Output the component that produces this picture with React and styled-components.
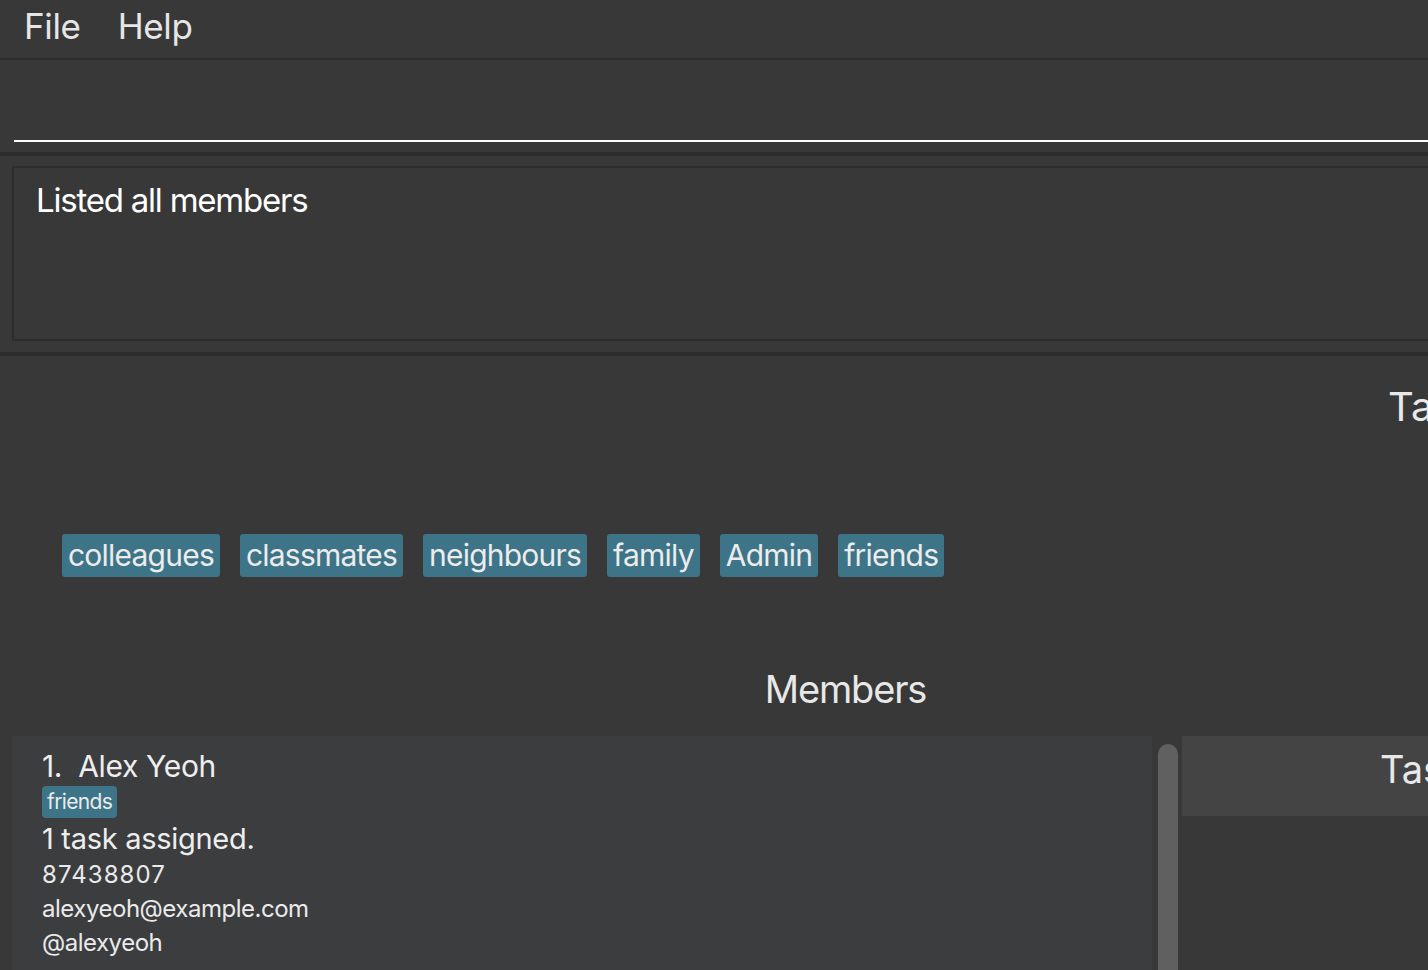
import React from "react";
import styled, { createGlobalStyle } from "styled-components";

const Global = createGlobalStyle`
  html, body { margin: 0; padding: 0; background: #383838; overflow: hidden; }
  body { font-family: Inter, "Noto Sans", sans-serif; }
  #root { width: 1428px; height: 970px; overflow: hidden; }
`;

const Page = styled.div`
  width: 1800px;
  display: flex;
  flex-direction: column;
  background: #383838;
  color: #eeeeee;
`;

const MenuBar = styled.div`
  height: 58px;
  display: flex;
  align-items: flex-start;
  gap: 37px;
  padding-left: 24px;
  border-bottom: 2px solid #2c2c2c;
`;

const MenuItem = styled.span`
  font-size: 35px;
  line-height: 42px;
  margin-top: 5px;
  color: #e6e6e6;
  letter-spacing: -0.01em;
`;

const CommandArea = styled.div`
  height: 92px;
  display: flex;
  align-items: flex-end;
  padding: 0 0 10px 14px;
  box-sizing: border-box;
`;

const CommandInput = styled.div`
  flex: 1;
  height: 70px;
  border-bottom: 2px solid #ffffff;
`;

const Divider = styled.div`
  height: 4px;
  background: #2c2c2c;
`;

const ResultArea = styled.div`
  padding: 10px 0 11px 12px;
`;

const ResultBox = styled.div`
  height: 175px;
  box-sizing: border-box;
  border: 2px solid #2c2c2c;
  padding: 12px 0 0 22px;
  font-size: 33px;
  line-height: 40px;
  color: #ffffff;
  letter-spacing: -0.037em;
`;

const Main = styled.div`
  display: flex;
  flex-direction: column;
  padding-top: 31px;
`;

const TagsTitle = styled.div`
  font-size: 40px;
  line-height: 40px;
  padding-left: 1388px;
  color: #e8e8e8;
`;

const TagRow = styled.div`
  display: flex;
  gap: 20px;
  padding-left: 62px;
  margin-top: 107px;
`;

const Tag = styled.span`
  background: #3d7488;
  color: #ececec;
  border-radius: ${(p) => (p.$small ? 4 : 3)}px;
  font-size: ${(p) => (p.$small ? 21 : 30)}px;
  line-height: ${(p) => (p.$small ? 32 : 43)}px;
  height: ${(p) => (p.$small ? 32 : 43)}px;
  padding: 0 ${(p) => (p.$small ? 5 : 6)}px;
  letter-spacing: ${(p) => (p.$small ? -0.03 : -0.026)}em;
  white-space: nowrap;
`;

const MembersTitle = styled.div`
  width: 1691px;
  text-align: center;
  font-size: 38px;
  line-height: 40px;
  margin-top: 92px;
  color: #e8e8e8;
  letter-spacing: -0.03em;
`;

const Split = styled.div`
  display: flex;
  margin-top: 27px;
  padding-left: 12px;
  height: 400px;
`;

const MemberList = styled.div`
  width: 1140px;
  background: #3c3d3f;
  display: flex;
  flex-direction: column;
`;

const ScrollTrack = styled.div`
  width: 20px;
  margin-left: 6px;
  padding-top: 8px;
  display: flex;
`;

const Thumb = styled.div`
  flex: 1;
  background: #606060;
  border-radius: 10px 10px 0 0;
`;

const TasksPanel = styled.div`
  flex: 1;
  margin-left: 4px;
  display: flex;
  flex-direction: column;
`;

const TasksHeader = styled.div`
  height: 80px;
  box-sizing: border-box;
  background: #444444;
  padding: 10px 0 0 198px;
  font-size: 38px;
  line-height: 46px;
  color: #e8e8e8;
`;

const Card = styled.div`
  display: flex;
  flex-direction: column;
  align-items: flex-start;
  padding: 12px 0 0 30px;
`;

const Name = styled.div`
  font-size: 30px;
  line-height: 36px;
  color: #eeeeee;
  letter-spacing: -0.012em;
  white-space: pre;
`;

const CardTags = styled.div`
  display: flex;
  gap: 8px;
  margin-top: 2px;
`;

const TaskCount = styled.div`
  font-size: 29px;
  line-height: 34px;
  margin-top: 4px;
  color: #eeeeee;
  letter-spacing: -0.01em;
`;

const Detail = styled.div`
  font-size: 24px;
  line-height: 34px;
  margin-top: ${(p) => p.$mt || 0}px;
  color: #eaeaea;
  letter-spacing: ${(p) => (p.$wide ? 0.045 : -0.02)}em;
`;

const tags = ["colleagues", "classmates", "neighbours", "family", "Admin", "friends"];

export default function App() {
  return (
    <>
      <Global />
      <Page>
        <MenuBar>
          <MenuItem>File</MenuItem>
          <MenuItem>Help</MenuItem>
        </MenuBar>
        <CommandArea>
          <CommandInput />
        </CommandArea>
        <Divider />
        <ResultArea>
          <ResultBox>Listed all members</ResultBox>
        </ResultArea>
        <Divider />
        <Main>
          <TagsTitle>Tags</TagsTitle>
          <TagRow>
            {tags.map((t) => (
              <Tag key={t}>{t}</Tag>
            ))}
          </TagRow>
          <MembersTitle>Members</MembersTitle>
          <Split>
            <MemberList>
              <Card>
                <Name>{"1.  Alex Yeoh"}</Name>
                <CardTags>
                  <Tag $small>friends</Tag>
                </CardTags>
                <TaskCount>1 task assigned.</TaskCount>
                <Detail $mt={2} $wide>87438807</Detail>
                <Detail>alexyeoh@example.com</Detail>
                <Detail>@alexyeoh</Detail>
              </Card>
            </MemberList>
            <ScrollTrack>
              <Thumb />
            </ScrollTrack>
            <TasksPanel>
              <TasksHeader>Tasks</TasksHeader>
            </TasksPanel>
          </Split>
        </Main>
      </Page>
    </>
  );
}
